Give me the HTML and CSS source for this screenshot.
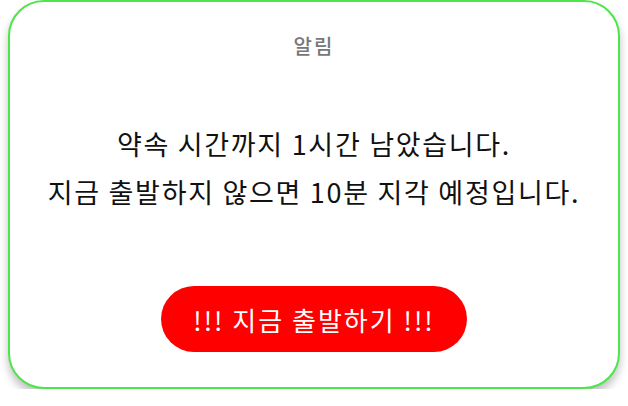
FILE: index.html
```html
<!DOCTYPE html>
<html>
<head>
    <title>알림</title>
    <link rel="stylesheet" href="styles.css">
</head>
<body>
    <div class="modal">
        <h3 class="modal-title">알림</h3>
        <div class="modal-message">
            <p>약속 시간까지 1시간 남았습니다.</p>
            <p>지금 출발하지 않으면 10분 지각 예정입니다.</p>
        </div>
        <button type="button" class="go-button">!!! 지금 출발하기 !!!</button>
    </div>
</body>
</html>
```

FILE: styles.css
```css
body {
    font-family: "Noto Sans CJK KR", "Noto Sans", sans-serif;
    background: #fff;
    margin: 0;
    padding: 0 8px;
}

.modal {
    box-sizing: border-box;
    height: 389px;
    background-color: #fff;
    border: 2px solid #4ee54a;
    border-radius: 36px;
    box-shadow: 0 6px 8px rgba(0, 0, 0, 0.25);
    display: flex;
    flex-direction: column;
    align-items: center;
    padding-top: 31px;
}

.modal-title {
    margin: 0;
    font-size: 20px;
    font-weight: 500;
    color: #777;
    line-height: 26px;
    letter-spacing: 2px;
}

.modal-message {
    margin-top: 61px;
    text-align: center;
    font-size: 27px;
    letter-spacing: 1.7px;
    color: #111;
}

.modal-message p {
    margin: 0;
    line-height: 48px;
}

.go-button {
    margin-top: 70px;
    width: 306px;
    height: 66px;
    border: none;
    border-radius: 33px;
    background-color: #fe0000;
    color: #fff;
    font-family: inherit;
    font-size: 26px;
    letter-spacing: 2px;
    cursor: pointer;
}
```
